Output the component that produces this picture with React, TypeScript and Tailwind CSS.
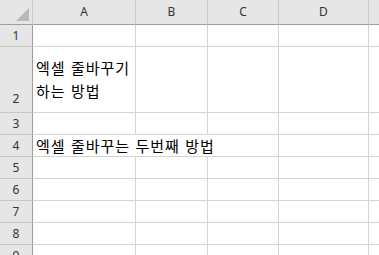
import React from "react";

const HDR = "bg-[#e6e6e6] text-[#333] text-[12px]";
const hfont = { fontFamily: '"Noto Sans", "Liberation Sans", sans-serif' } as React.CSSProperties;
const kfont = { fontFamily: '"Noto Sans CJK KR", "Noto Sans", sans-serif' } as React.CSSProperties;

function RowHead({ n, h, bottom }: { n: number; h: string; bottom?: boolean }) {
  return (
    <div
      className={`w-[33px] shrink-0 ${HDR} border-r border-r-[#9e9e9e] border-b border-b-[#c8c8c8] flex justify-center ${bottom ? "items-end pb-[4px]" : "items-center"} ${h}`}
      style={hfont}
    >
      {n}
    </div>
  );
}

function Cell({ w, children, cls = "" }: { w: string; children?: React.ReactNode; cls?: string }) {
  return <div className={`${w} shrink-0 border-r border-b border-[#d4d4d4] ${cls}`}>{children}</div>;
}

function EmptyRow({ n }: { n: number }) {
  return (
    <div className="flex h-[22px]">
      <RowHead n={n} h="h-[22px]" />
      <Cell w="w-[103px]" />
      <Cell w="w-[72px]" />
      <Cell w="w-[71px]" />
      <Cell w="w-[90px]" />
      <Cell w="w-[40px]" />
    </div>
  );
}

export default function App() {
  return (
    <div className="w-[379px] h-[255px] overflow-hidden bg-white text-black">
      {/* header row */}
      <div className="flex h-[25px]">
        <div className={`w-[33px] shrink-0 ${HDR} border-r border-r-[#c8c8c8] border-b border-b-[#9e9e9e] relative`}>
          <svg className="absolute left-[16px] top-[8px]" width="14" height="14" viewBox="0 0 14 14">
            <polygon points="13,0 13,13 0,13" fill="#b9b9b9" />
          </svg>
        </div>
        {[
          ["A", "w-[103px]"],
          ["B", "w-[72px]"],
          ["C", "w-[71px]"],
          ["D", "w-[90px]"],
          ["", "w-[40px]"],
        ].map(([l, w]) => (
          <div
            key={w + l}
            className={`${w} shrink-0 ${HDR} border-r border-r-[#c8c8c8] border-b border-b-[#9e9e9e] flex items-center justify-center`}
            style={hfont}
          >
            {l}
          </div>
        ))}
      </div>

      <EmptyRow n={1} />

      {/* row 2 */}
      <div className="flex h-[66px]">
        <RowHead n={2} h="h-[66px]" bottom />
        <Cell w="w-[103px]" cls="flex items-end pb-[10px] pl-[3px]">
          <div className="text-[15px] leading-[23px] tracking-[1px] [word-spacing:1px] whitespace-nowrap" style={kfont}>
            <div>엑셀 줄바꾸기</div>
            <div>하는 방법</div>
          </div>
        </Cell>
        <Cell w="w-[72px]" />
        <Cell w="w-[71px]" />
        <Cell w="w-[90px]" />
        <Cell w="w-[40px]" />
      </div>

      <EmptyRow n={3} />

      {/* row 4 */}
      <div className="flex h-[22px]">
        <RowHead n={4} h="h-[22px]" />
        <Cell w="w-[246px]" cls="flex items-center pl-[3px]">
          <div className="text-[15px] leading-[21px] tracking-[1px] [word-spacing:1px] whitespace-nowrap" style={kfont}>
            엑셀 줄바꾸는 두번째 방법
          </div>
        </Cell>
        <Cell w="w-[90px]" />
        <Cell w="w-[40px]" />
      </div>

      <EmptyRow n={5} />
      <EmptyRow n={6} />
      <EmptyRow n={7} />
      <EmptyRow n={8} />
      <EmptyRow n={9} />
    </div>
  );
}
